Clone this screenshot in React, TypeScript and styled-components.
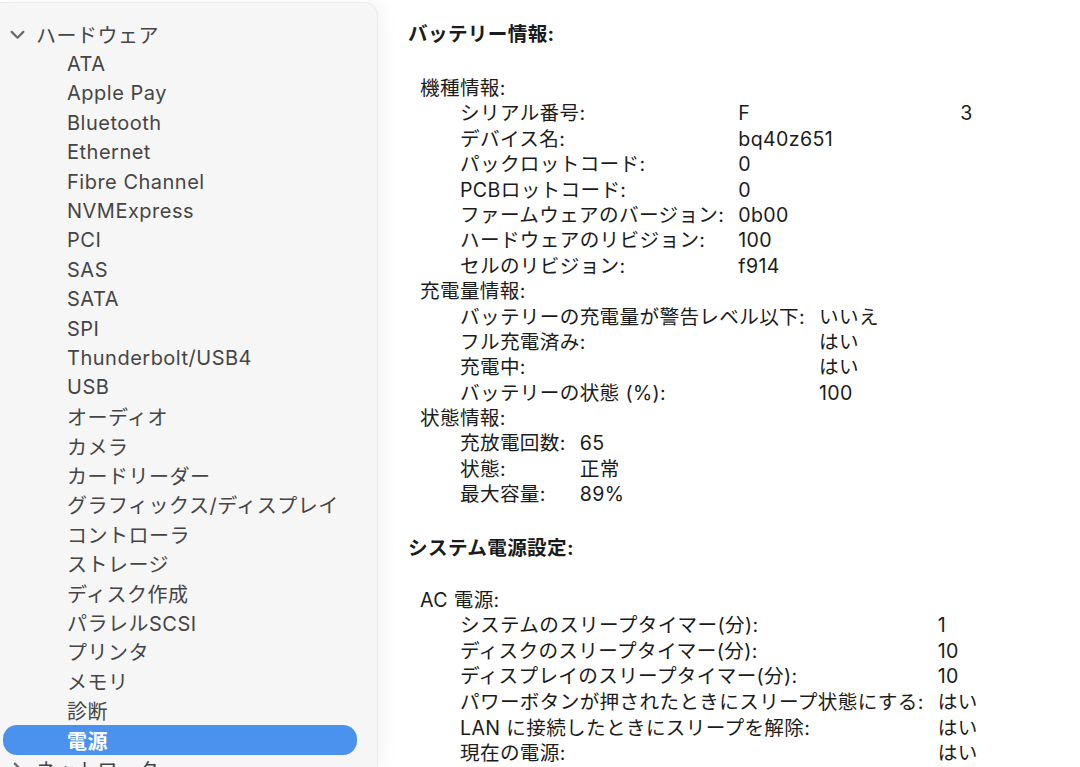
import React from 'react';
import styled, { createGlobalStyle } from 'styled-components';

const GlobalStyle = createGlobalStyle`
  html, body {
    margin: 0;
    padding: 0;
    background: #ffffff;
    overflow: hidden;
  }
  body {
    font-family: 'Inter', 'Noto Sans CJK JP', sans-serif;
    -webkit-font-smoothing: antialiased;
  }
`;

const Window = styled.div`
  display: flex;
  width: 1080px;
  height: 767px;
  overflow: hidden;
  background: #ffffff;
`;

const Sidebar = styled.nav`
  flex: 0 0 378px;
  margin-top: 2px;
  padding: 17px 20px 0 3px;
  box-sizing: border-box;
  background: #f6f6f6;
  border-top-right-radius: 14px;
  border-right: 1px solid #ececec;
  border-top: 1px solid #ececec;
  box-shadow: 4px 0 18px rgba(0, 0, 0, 0.05);
  display: flex;
  flex-direction: column;
`;

const TreeRow = styled.div<{ $level: number; $selected?: boolean }>`
  display: flex;
  align-items: center;
  height: 29.4px;
  flex-shrink: 0;
  padding-left: ${(p) => (p.$level === 0 ? 6 : 64)}px;
  border-radius: 14px;
  font-size: 20px;
  letter-spacing: 0.5px;
  color: ${(p) => (p.$selected ? '#ffffff' : '#454545')};
  background: ${(p) => (p.$selected ? '#4b92ee' : 'transparent')};
  font-weight: ${(p) => (p.$selected ? 600 : 400)};
  white-space: nowrap;
`;

const Chevron = styled.svg`
  width: 17px;
  height: 17px;
  margin-right: 10px;
  flex-shrink: 0;
`;

const Content = styled.main`
  flex: 1;
  padding: 22px 0 0 30px;
  color: #1b1b1b;
  font-size: 19.6px;
  letter-spacing: 0.35px;
`;

const Section = styled.section`
  margin-bottom: 28px;
`;

const SectionTitle = styled.div<{ $gap: number }>`
  font-weight: 700;
  height: 25.4px;
  line-height: 25.4px;
  margin-bottom: ${(p) => p.$gap}px;
`;

const Group = styled.div`
  padding-left: 12px;
`;

const GroupTitle = styled.div`
  height: 25.4px;
  line-height: 25.4px;
`;

const Table = styled.div<{ $pitch: number }>`
  display: grid;
  grid-template-columns: max-content max-content;
  grid-auto-rows: ${(p) => p.$pitch}px;
  column-gap: 14px;
  padding-left: 40px;
  line-height: ${(p) => p.$pitch}px;
  white-space: nowrap;
`;

const Label = styled.div``;

const Value = styled.div<{ $split?: number }>`
  display: flex;
  gap: ${(p) => p.$split ?? 0}px;
`;

type Row = [string, string, string?];
type InfoBlock = { title: string; pitch: number; rows: Row[] };

const hardware = [
  'ATA',
  'Apple Pay',
  'Bluetooth',
  'Ethernet',
  'Fibre Channel',
  'NVMExpress',
  'PCI',
  'SAS',
  'SATA',
  'SPI',
  'Thunderbolt/USB4',
  'USB',
  'オーディオ',
  'カメラ',
  'カードリーダー',
  'グラフィックス/ディスプレイ',
  'コントローラ',
  'ストレージ',
  'ディスク作成',
  'パラレルSCSI',
  'プリンタ',
  'メモリ',
  '診断',
  '電源',
];

const battery: InfoBlock[] = [
  {
    title: '機種情報:',
    pitch: 25.4,
    rows: [
      ['シリアル番号:', 'F', '3'],
      ['デバイス名:', 'bq40z651'],
      ['パックロットコード:', '0'],
      ['PCBロットコード:', '0'],
      ['ファームウェアのバージョン:', '0b00'],
      ['ハードウェアのリビジョン:', '100'],
      ['セルのリビジョン:', 'f914'],
    ],
  },
  {
    title: '充電量情報:',
    pitch: 25.4,
    rows: [
      ['バッテリーの充電量が警告レベル以下:', 'いいえ'],
      ['フル充電済み:', 'はい'],
      ['充電中:', 'はい'],
      ['バッテリーの状態 (%):', '100'],
    ],
  },
  {
    title: '状態情報:',
    pitch: 25.4,
    rows: [
      ['充放電回数:', '65'],
      ['状態:', '正常'],
      ['最大容量:', '89%'],
    ],
  },
];

const power: InfoBlock[] = [
  {
    title: 'AC 電源:',
    pitch: 25.7,
    rows: [
      ['システムのスリープタイマー(分):', '1'],
      ['ディスクのスリープタイマー(分):', '10'],
      ['ディスプレイのスリープタイマー(分):', '10'],
      ['パワーボタンが押されたときにスリープ状態にする:', 'はい'],
      ['LAN に接続したときにスリープを解除:', 'はい'],
      ['現在の電源:', 'はい'],
    ],
  },
];

const ChevronIcon = ({ open }: { open: boolean }) => (
  <Chevron viewBox="0 0 16 16">
    <path
      d={open ? 'M2.5 5.5 L8 11 L13.5 5.5' : 'M5.5 2.5 L11 8 L5.5 13.5'}
      fill="none"
      stroke="#6a6a6a"
      strokeWidth="2.1"
      strokeLinecap="round"
      strokeLinejoin="round"
    />
  </Chevron>
);

const InfoGroup = ({ title, pitch, rows }: InfoBlock) => (
  <Group>
    <GroupTitle>{title}</GroupTitle>
    <Table $pitch={pitch}>
      {rows.map(([label, value, extra]) => (
        <React.Fragment key={label}>
          <Label>{label}</Label>
          <Value $split={extra ? 210 : 0}>
            <span>{value}</span>
            {extra && <span>{extra}</span>}
          </Value>
        </React.Fragment>
      ))}
    </Table>
  </Group>
);

export default function App() {
  return (
    <>
      <GlobalStyle />
      <Window>
        <Sidebar>
          <TreeRow $level={0}>
            <ChevronIcon open />
            ハードウェア
          </TreeRow>
          {hardware.map((name) => (
            <TreeRow key={name} $level={1} $selected={name === '電源'}>
              {name}
            </TreeRow>
          ))}
          <TreeRow $level={0}>
            <ChevronIcon open={false} />
            ネットワーク
          </TreeRow>
        </Sidebar>
        <Content>
          <Section>
            <SectionTitle $gap={28.6}>バッテリー情報:</SectionTitle>
            {battery.map((g) => (
              <InfoGroup key={g.title} {...g} />
            ))}
          </Section>
          <Section>
            <SectionTitle $gap={26.6}>システム電源設定:</SectionTitle>
            {power.map((g) => (
              <InfoGroup key={g.title} {...g} />
            ))}
          </Section>
        </Content>
      </Window>
    </>
  );
}
